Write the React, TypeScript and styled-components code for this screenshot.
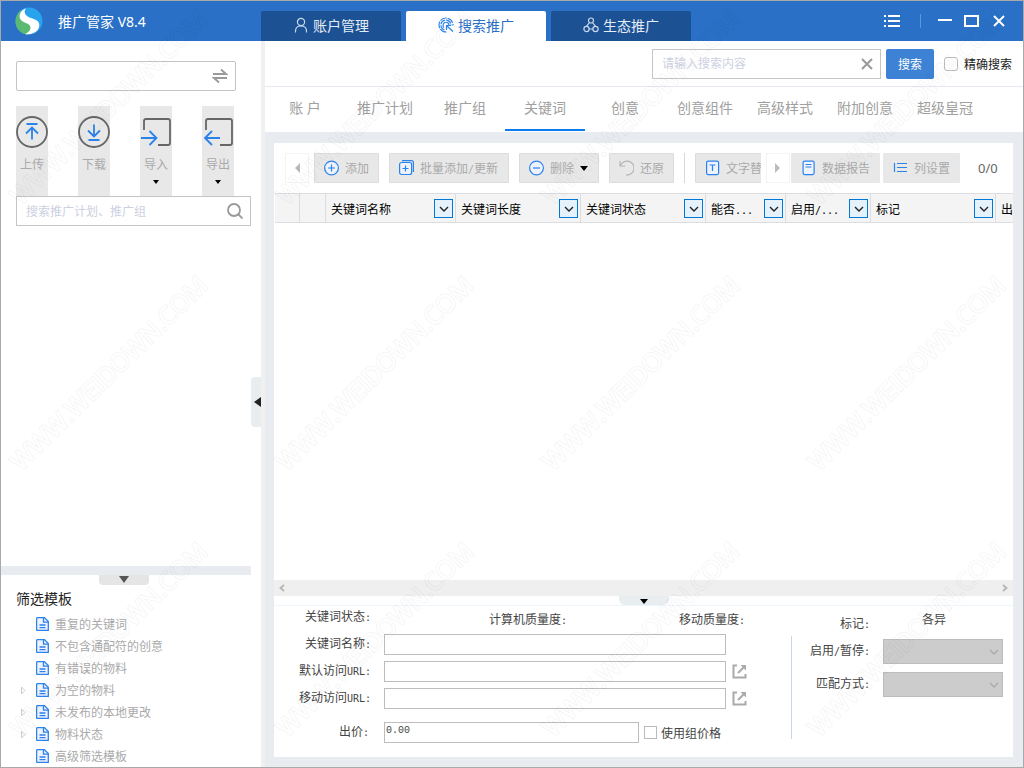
import React from 'react';
import styled, { createGlobalStyle } from 'styled-components';

const Global = createGlobalStyle`
  * { box-sizing: border-box; }
  body {
    margin: 0;
    font-family: "Noto Sans", "Noto Sans CJK SC", sans-serif;
    font-size: 12px;
    color: #333;
  }
  button, input, select { font: inherit; color: inherit; margin: 0; }
  button { padding: 0; border: 0; background: none; white-space: nowrap; }
  svg { display: block; flex: none; }
`;

const Window = styled.div`
  position: relative;
  min-height: 100vh;
  display: flex;
  flex-direction: column;
  border: 1px solid #a9a9a9;
  background: #fff;
`;

const Watermark = styled.svg`
  position: absolute;
  inset: 0;
  width: 100%;
  height: 100%;
  pointer-events: none;
`;

/* ---------- title bar ---------- */

const TitleBar = styled.header`
  display: flex;
  height: 40px;
  background: #2970c6;
  color: #fff;
  font-size: 14px;
`;

const Brand = styled.div`
  flex: none;
  width: 260px;
  padding-left: 14px;
  display: flex;
  align-items: center;
  gap: 15px;
`;

const ModuleTabs = styled.nav`
  flex: 1;
  display: flex;
  align-items: flex-end;
  gap: 5px;
`;

const ModuleTab = styled.button<{ $active?: boolean }>`
  width: 140px;
  height: 30px;
  display: flex;
  align-items: center;
  justify-content: center;
  gap: 4px;
  padding-bottom: 2px;
  border-radius: 2px 2px 0 0;
  background: ${p => (p.$active ? '#fff' : '#1c5293')};
  color: ${p => (p.$active ? '#2970c6' : '#e4ecf6')};
`;

const WindowButtons = styled.div`
  display: flex;
  align-items: center;
  gap: 12px;
  padding-right: 16px;
`;

const WindowDivider = styled.span`
  width: 1px;
  height: 14px;
  margin: 0 5px 0 8px;
  background: #5b96dc;
`;

/* ---------- frame ---------- */

const Body = styled.div`
  flex: 1;
  display: flex;
`;

const Sidebar = styled.aside`
  flex: none;
  width: 250px;
  display: flex;
  flex-direction: column;
`;

const CollapseStrip = styled.div`
  flex: none;
  width: 14px;
  display: flex;
  align-items: center;
  border-right: 4px solid #f0f0f0;
  padding-bottom: 4px;
`;

const CollapseHandle = styled.button`
  width: 10px;
  height: 50px;
  display: flex;
  align-items: center;
  justify-content: flex-end;
  border-radius: 4px 0 0 4px;
  background: #e8edf0;
`;

const Main = styled.main`
  flex: 1;
  min-width: 0;
  display: flex;
  flex-direction: column;
  background: #e8ecf1;
`;

/* ---------- sidebar ---------- */

const Field = styled.div<{ $round?: boolean }>`
  display: flex;
  align-items: center;
  height: 30px;
  padding: 0 7px 0 8px;
  border: 1px solid #c4c4c4;
  border-radius: ${p => (p.$round ? '2px' : '0')};
  background: #fff;
`;

const FieldInput = styled.input`
  flex: 1;
  min-width: 0;
  height: 100%;
  padding: 0 1px;
  border: 0;
  outline: 0;
  background: none;
  &::placeholder { color: #ccd0e2; opacity: 1; }
`;

const AccountArea = styled.div`
  padding: 20px 15px 15px;
`;

const SyncTools = styled.div`
  display: flex;
  gap: 30px;
  padding-left: 15px;
`;

const SyncTool = styled.button`
  width: 32px;
  height: 90px;
  padding-top: 10px;
  display: flex;
  flex-direction: column;
  align-items: center;
  background: #e8e8e8;
  color: #aaa;
`;

const SyncLabel = styled.span`
  margin: 9px 0 7px;
  line-height: 16px;
`;

const TreeSearch = styled.div`
  flex: 1;
  padding-left: 15px;
`;

const Splitter = styled.div`
  height: 9px;
  background: #e8ecf1;
`;

const SplitterHandle = styled.button`
  align-self: center;
  width: 50px;
  height: 10px;
  margin-right: 4px;
  display: flex;
  justify-content: center;
  padding-top: 1px;
  border-radius: 0 0 4px 4px;
  background: #e5e5e5;
`;

const TemplateTitle = styled.h2`
  margin: 0;
  padding-left: 15px;
  font-size: 14px;
  font-weight: 400;
  line-height: 28px;
  color: #222;
`;

const TemplateList = styled.ul`
  margin: 0;
  padding: 0 0 0 17px;
  list-style: none;
`;

const TemplateItem = styled.li`
  display: flex;
  align-items: center;
  height: 22px;
  color: #aaa;
`;

const ExpandSlot = styled.span`
  width: 18px;
`;

const TemplateName = styled.span`
  padding-left: 6px;
`;

/* ---------- search row and level tabs ---------- */

const SearchRow = styled.div`
  display: flex;
  justify-content: flex-end;
  align-items: center;
  gap: 5px;
  height: 46px;
  padding-right: 11px;
  border-bottom: 1px solid #e6e9f0;
  background: #fff;
`;

const KeywordField = styled(Field)`
  width: 229px;
`;

const SearchButton = styled.button`
  width: 48px;
  height: 30px;
  border-radius: 2px;
  background: #3d82d4;
  color: #fff;
`;

const CheckLabel = styled.label<{ $muted?: boolean }>`
  display: flex;
  align-items: center;
  gap: ${p => (p.$muted ? '4px' : '6px')};
  color: ${p => (p.$muted ? '#444' : '#222')};
  white-space: nowrap;
`;

const ExactLabel = styled(CheckLabel)`
  margin-left: 5px;
`;

const CheckBox = styled.input<{ $round?: boolean }>`
  appearance: none;
  flex: none;
  width: ${p => (p.$round ? '14px' : '13px')};
  height: ${p => (p.$round ? '14px' : '13px')};
  border: 1px solid #bbb;
  border-radius: ${p => (p.$round ? '3px' : '0')};
  background: #fff;
`;

const LevelTabs = styled.nav`
  display: flex;
  height: 45px;
  padding-bottom: 1px;
  background: #fff;
`;

const LevelTab = styled.button<{ $active?: boolean }>`
  width: 80px;
  padding-bottom: 2px;
  font-size: 14px;
  color: #a0a0a0;
  border-bottom: 2px solid ${p => (p.$active ? '#0a7cf0' : 'transparent')};
`;

/* ---------- keyword panel ---------- */

const Panel = styled.section`
  flex: 1;
  min-width: 0;
  display: flex;
  flex-direction: column;
  margin: 11px 10px 10px 9px;
  background: #fff;
`;

const Toolbar = styled.div`
  display: flex;
  align-items: center;
  height: 50px;
  padding-left: 11px;
`;

const PageArrow = styled.button`
  flex: none;
  width: 24px;
  height: 30px;
  display: flex;
  align-items: center;
  justify-content: center;
  border: 1px solid #f4f4f4;
`;

const ToolStrip = styled.div`
  flex: 1;
  min-width: 0;
  display: flex;
  align-items: center;
  gap: 10px;
  margin: 0 5px;
  overflow: hidden;
`;

const ToolButton = styled.button<{ $flat?: boolean }>`
  flex: none;
  height: 30px;
  padding: 0 9px;
  display: flex;
  align-items: center;
  gap: 6px;
  border: 1px solid ${p => (p.$flat ? '#e8e8e8' : '#dcdcdc')};
  border-radius: 1px;
  background: #e8e8e8;
  color: #aaa;
`;

const WideToolButton = styled(ToolButton)`
  width: 120px;
`;

const MenuToolButton = styled(ToolButton)`
  width: 80px;
`;

const ReportTools = styled.div`
  display: flex;
  gap: 3px;
  padding-left: 1px;
`;

const ToolDivider = styled.span`
  flex: none;
  width: 1px;
  height: 30px;
  background: #d8d8d8;
`;

const Counter = styled.span`
  flex: none;
  width: 53px;
  padding-left: 18px;
  font-size: 13px;
  color: #666;
`;

const GridArea = styled.div`
  flex: 1;
  margin-left: 1px;
  overflow: hidden;
`;

const Grid = styled.table`
  table-layout: fixed;
  width: 826px;
  min-width: 100%;
  border-collapse: separate;
  border-spacing: 0;
  background: #f4f4f4;
`;

const HeadCell = styled.th<{ $w: number }>`
  width: ${p => p.$w}px;
  height: 30px;
  padding: 1px 2px 0 5px;
  border: solid #dcdde0;
  border-width: 1px 1px 1px 0;
  font-weight: 400;
  color: #000;
  text-align: left;
  white-space: nowrap;
`;

const HeadContent = styled.div`
  display: flex;
  align-items: center;
  justify-content: space-between;
`;

const FilterButton = styled.button`
  flex: none;
  width: 19px;
  height: 19px;
  display: flex;
  align-items: center;
  justify-content: center;
  border: 1px solid #0078d7;
  background: #e5f1fb;
`;

const HalfWidth = styled.span`
  font-family: "DejaVu Sans Mono", monospace;
  font-size: 10px;
`;

const ScrollTrack = styled.div`
  display: flex;
  justify-content: space-between;
  align-items: center;
  height: 16px;
  padding: 0 4px;
  background: #efefef;
`;

const DetailSplitter = styled.div`
  display: flex;
  justify-content: center;
  height: 10px;
  border-bottom: 1px solid #edf6fd;
`;

const DetailHandle = styled.button`
  width: 50px;
  height: 9px;
  display: flex;
  justify-content: center;
  align-items: flex-end;
  padding-bottom: 1px;
  border-radius: 0 0 6px 6px;
  background: #e8edf0;
`;

/* ---------- detail form ---------- */

const Detail = styled.div`
  display: flex;
  height: 151px;
  color: #444;
`;

const KeywordForm = styled.form`
  flex: 1;
  display: grid;
  grid-template-columns: 97px minmax(0, 1fr) 15px;
  grid-template-rows: 22px 21px 21px 21px 28px;
  row-gap: 6px;
  align-items: center;
  align-content: start;
  padding-right: 44px;
`;

const FormLabel = styled.label`
  line-height: 18px;
  text-align: right;
  white-space: nowrap;
`;

const TextBox = styled.input`
  width: 100%;
  height: 21px;
  padding: 0 1px;
  border: 1px solid #bdbdbd;
  background: #fff;
`;

const FieldSlot = styled.div`
  display: flex;
  padding-left: 13px;
  margin-right: 6px;
`;

const QualityRow = styled.div`
  grid-column: 2 / 4;
  display: flex;
  padding-left: 118px;
`;

const Quality = styled.span`
  flex: none;
  width: 190px;
  padding-top: 4px;
  &:last-child { width: auto; }
`;

const OpenLink = styled.a`
  color: #aaa;
`;

const BidLabel = styled(FormLabel)`
  padding: 6px 2px 0 0;
`;

const BidRow = styled.div`
  grid-column: 2 / 4;
  align-self: end;
  display: flex;
  align-items: center;
  gap: 5px;
  padding-left: 13px;
`;

const BidBox = styled(TextBox)`
  flex: none;
  width: 255px;
  padding-bottom: 4px;
  font-family: "Liberation Mono", monospace;
  font-size: 10px;
`;

const DetailSide = styled.div`
  flex: none;
  width: 222px;
`;

const MarkRow = styled.div`
  display: grid;
  grid-template-columns: 78px 120px;
  column-gap: 13px;
  height: 30px;
  padding: 9px 10px 0 1px;
`;

const MarkValue = styled.span`
  padding-left: 39px;
  line-height: 10px;
`;

const StateFields = styled.form`
  display: grid;
  grid-template-columns: 78px 120px;
  grid-template-rows: 25px 25px;
  gap: 8px 13px;
  align-items: center;
  align-content: start;
  height: 103px;
  padding: 3px 10px 0 0;
  border-left: 1px solid #c9d8e6;
`;

const SelectWrap = styled.span`
  display: grid;
  align-items: center;
  justify-items: end;
  > * { grid-area: 1 / 1; }
  > svg { margin-right: 4px; pointer-events: none; }
`;

const Select = styled.select`
  appearance: none;
  width: 100%;
  height: 25px;
  border: 1px solid #bcbcbc;
  border-radius: 0;
  background: #ccc;
  opacity: 1;
`;

/* ---------- icons ---------- */

const Stroke = ({ w, h, color = '#2b83ea', sw = 1, children }: {
  w: number; h: number; color?: string; sw?: number; children: React.ReactNode;
}) => (
  <svg width={w} height={h} viewBox={`0 0 ${w} ${h}`} fill="none" stroke={color} strokeWidth={sw} aria-hidden="true">
    {children}
  </svg>
);

const Arrow = ({ w, h, d, color }: { w: number; h: number; d: string; color: string }) => (
  <svg width={w} height={h} viewBox={`0 0 ${w} ${h}`} aria-hidden="true"><path d={d} fill={color} /></svg>
);

const DownArrow = ({ color = '#000' }: { color?: string }) => <Arrow w={8} h={5} d="M0 0h8L4 5z" color={color} />;

const Chevron = ({ color = '#222' }: { color?: string }) => (
  <Stroke w={10} h={6} color={color} sw={1.4}><path d="M1 1l4 4 4-4" /></Stroke>
);

const Logo = () => (
  <svg width="28" height="28" viewBox="0 0 28 28" aria-hidden="true">
    <circle cx="14" cy="14" r="13.5" fill="#2aa3ef" />
    <path d="M6.500 2.800C-1 8-1.500 19 5 24.500C7.500 26.800 10 27.500 12.500 27.500L18 22L13 14L6 10z" fill="#5bb974" />
    <path d="M11 1.300C5.500 3.500 3.800 8 5 11.500C6.500 15.500 12.500 15.500 14.800 18.500C16.800 21.500 14.500 25 10 27.200C17 28 24 24.500 24.300 18.500C24.500 12.500 18.500 12.500 14 10.300C9.500 8 8.500 4.500 11 1.300z" fill="#fff" />
  </svg>
);

const FilePage = () => (
  <Stroke w={13} h={14} sw={1.3}>
    <path d="M1.500.6h6.900l3.900 4v8.800H1.500A.9.9 0 0 1 .6 12.500v-11a.9.9 0 0 1 .9-.9z" fill="#eef3ff" />
    <path d="M7.500.6v4.600h4.800M3.500 8h6M3.500 10.700h6" />
  </Stroke>
);

const OpenOut = () => (
  <Stroke w={15} h={15} color="#aaa" sw={2}>
    <path d="M5 1.500H1.500v12h12V10" />
    <path d="M6 9l7-7" />
    <path d="M8.500 1H14v5.500z" fill="#aaa" stroke="none" />
  </Stroke>
);

const syncTools = [
  { name: '上传', menu: false, icon: (
    <Stroke w={32} h={32} sw={1.8}><circle cx="16" cy="16" r="15" stroke="#666" /><path d="M10.500 8h11M16 23.500V12M10 17.500l6-6 6 6" /></Stroke>) },
  { name: '下载', menu: false, icon: (
    <Stroke w={32} h={32} sw={1.8}><circle cx="16" cy="16" r="15" stroke="#666" /><path d="M10.500 24h11M16 8.500V20M10 14.500l6 6 6-6" /></Stroke>) },
  { name: '导入', menu: true, icon: (
    <Stroke w={32} h={32} sw={1.8}><path d="M4 14V5q0-2 2-2h22q2 0 2 2v22q0 2-2 2H18" stroke="#666" /><path d="M1 22h15M9.500 15l7 7-7 7" /></Stroke>) },
  { name: '导出', menu: true, icon: (
    <Stroke w={32} h={32} sw={1.8}><path d="M4 14V5q0-2 2-2h22q2 0 2 2v22q0 2-2 2H18" stroke="#666" /><path d="M18 22H3M10 15l-7 7 7 7" /></Stroke>) },
];

const templates = [
  { name: '重复的关键词' },
  { name: '不包含通配符的创意' },
  { name: '有错误的物料' },
  { name: '为空的物料', nested: true },
  { name: '未发布的本地更改', nested: true },
  { name: '物料状态', nested: true },
  { name: '高级筛选模板' },
];

const levels = ['账 户', '推广计划', '推广组', '关键词', '创意', '创意组件', '高级样式', '附加创意', '超级皇冠'];

const columns = [
  { w: 25 }, { w: 26 },
  { w: 130, name: '关键词名称' },
  { w: 125, name: '关键词长度' },
  { w: 125, name: '关键词状态' },
  { w: 80, name: '能否', cut: '...' },
  { w: 85, name: '启用', cut: '/...' },
  { w: 125, name: '标记' },
  { w: 105, name: '出价' },
];

export default function App() {
  return (
    <Window>
      <Global />
      <TitleBar>
        <Brand><Logo /><span>推广管家 V8.4</span></Brand>
        <ModuleTabs>
          <ModuleTab>
            <Stroke w={16} h={16} color="#c8d8ee" sw={1.2}><circle cx="8" cy="5" r="3.600" /><path d="M2.500 15.500v-1.500q0-5 5.500-5t5.500 5v1.500" /></Stroke>
            账户管理
          </ModuleTab>
          <ModuleTab $active>
            <Stroke w={16} h={16} sw={1.200}>
              <path d="M8.500 15A7 7 0 1 1 15 8.500" strokeDasharray="7 1" />
              <path d="M6.500 12.800A5 5 0 1 1 12.900 8.500" strokeDasharray="6 1" />
              <path d="M6 10.500A3 3 0 1 1 11 8.500" />
              <path d="M8.500 8.500l6.500 6M8.500 13V8.500h4.500" />
            </Stroke>
            搜索推广
          </ModuleTab>
          <ModuleTab>
            <Stroke w={16} h={16} color="#c8d8ee" sw={1.200}>
              <circle cx="8" cy="3.500" r="2.500" /><circle cx="3.500" cy="12" r="2.600" /><circle cx="12.500" cy="12" r="2.600" />
              <path d="M6.500 5.500L3.500 9.400M9.500 5.500l3 3.900M6 12h4" />
            </Stroke>
            生态推广
          </ModuleTab>
        </ModuleTabs>
        <WindowButtons>
          <button aria-label="菜单">
            <Stroke w={16} h={12} color="#fff" sw={2}><path d="M0 1h2M4 1h12M0 6h2M4 6h12M0 11h2M4 11h12" /></Stroke>
          </button>
          <WindowDivider />
          <button aria-label="最小化"><Stroke w={14} h={12} color="#fff" sw={2}><path d="M0 5h14" /></Stroke></button>
          <button aria-label="最大化"><Stroke w={15} h={12} color="#fff" sw={2}><path d="M1 1h13v10H1z" /></Stroke></button>
          <button aria-label="关闭"><Stroke w={16} h={12} color="#fff" sw={2}><path d="M3 1l10 10M13 1L3 11" /></Stroke></button>
        </WindowButtons>
      </TitleBar>

      <Body>
        <Sidebar>
          <AccountArea>
            <Field $round>
              <FieldInput aria-label="账户" />
              <Stroke w={16} h={16} color="#999" sw={1.800}><path d="M1 6h13l-5-4.500M15 10H2l5 4.500" /></Stroke>
            </Field>
          </AccountArea>
          <SyncTools>
            {syncTools.map(t => (
              <SyncTool key={t.name} disabled>
                {t.icon}
                <SyncLabel>{t.name}</SyncLabel>
                {t.menu && <Arrow w={6} h={4} d="M0 0h6L3 4z" color="#000" />}
              </SyncTool>
            ))}
          </SyncTools>
          <TreeSearch>
            <Field>
              <FieldInput aria-label="搜索" placeholder="搜索推广计划、推广组" />
              <Stroke w={16} h={16} color="#999" sw={1.800}><circle cx="7" cy="7" r="6" /><path d="M11 11l4.500 4.500" /></Stroke>
            </Field>
          </TreeSearch>
          <Splitter />
          <SplitterHandle aria-label="收起"><Arrow w={10} h={7} d="M0 0h10L5 7z" color="#555" /></SplitterHandle>
          <TemplateTitle>筛选模板</TemplateTitle>
          <TemplateList>
            {templates.map(t => (
              <TemplateItem key={t.name}>
                <ExpandSlot>
                  {t.nested && <Stroke w={8} h={9} color="#ccc"><path d="M3.500 1v7l3.500-3.500z" /></Stroke>}
                </ExpandSlot>
                <FilePage />
                <TemplateName>{t.name}</TemplateName>
              </TemplateItem>
            ))}
          </TemplateList>
        </Sidebar>

        <CollapseStrip>
          <CollapseHandle aria-label="收起侧栏"><Arrow w={7} h={10} d="M7 0v10L0 5z" color="#222" /></CollapseHandle>
        </CollapseStrip>

        <Main>
          <SearchRow>
            <KeywordField>
              <FieldInput aria-label="搜索内容" placeholder="请输入搜索内容" />
              <Stroke w={12} h={12} color="#999" sw={2}><path d="M1 1l10 10M11 1L1 11" /></Stroke>
            </KeywordField>
            <SearchButton>搜索</SearchButton>
            <ExactLabel><CheckBox type="checkbox" $round />精确搜索</ExactLabel>
          </SearchRow>
          <LevelTabs>
            {levels.map(l => <LevelTab key={l} $active={l === '关键词'}>{l}</LevelTab>)}
          </LevelTabs>

          <Panel>
            <Toolbar>
              <PageArrow aria-label="上一组"><Arrow w={5} h={10} d="M5 0v10L0 5z" color="#bbb" /></PageArrow>
              <ToolStrip>
                <ToolButton disabled>
                  <Stroke w={15} h={16} sw={1.200}><circle cx="7.500" cy="8" r="6.900" fill="#eef3ff" /><path d="M4 8h7M7.500 4.500v7" /></Stroke>
                  添加
                </ToolButton>
                <WideToolButton disabled>
                  <Stroke w={15} h={16} sw={1.200}>
                    <rect x=".6" y="2.500" width="12" height="12" rx="2" fill="#eef3ff" /><path d="M3 .6h9.400q2 0 2 2V12M3.500 8.500h6M6.500 5.500v6" />
                  </Stroke>
                  <span>批量添加<HalfWidth>/</HalfWidth>更新</span>
                </WideToolButton>
                <MenuToolButton disabled>
                  <Stroke w={15} h={16} sw={1.200}><circle cx="7.500" cy="8" r="6.900" fill="#eef3ff" /><path d="M4 8h7" /></Stroke>
                  删除
                  <DownArrow />
                </MenuToolButton>
                <ToolButton disabled>
                  <Stroke w={15} h={16} color="#b5b5b5" sw={1.200}><path d="M1 1v5h5M1.500 5.500A7 7 0 1 1 7 15" /></Stroke>
                  还原
                </ToolButton>
                <ToolDivider />
                <ToolButton disabled>
                  <Stroke w={15} h={16} sw={1.200}><rect x="1.600" y="1.100" width="12" height="13.500" rx="1.500" fill="#eef3ff" /><path d="M4.500 5h6M7.500 5v6" /></Stroke>
                  文字替换
                </ToolButton>
              </ToolStrip>
              <PageArrow aria-label="下一组"><Arrow w={5} h={10} d="M0 0v10L5 5z" color="#bbb" /></PageArrow>
              <ReportTools>
                <ToolButton $flat disabled>
                  <Stroke w={15} h={16} sw={1.200}><rect x="2.100" y="1.100" width="11" height="13.500" rx="1.500" fill="#eef3ff" /><path d="M4.500 4.500h6M4.500 7h6" /></Stroke>
                  数据报告
                </ToolButton>
                <ToolButton $flat disabled>
                  <Stroke w={15} h={16} sw={1.200}><path d="M1.500 3v9M4 3.500h10M4 7.500h10M4 11.500h10" /></Stroke>
                  列设置
                </ToolButton>
              </ReportTools>
              <Counter>0/0</Counter>
            </Toolbar>

            <GridArea>
              <Grid>
                <thead>
                  <tr>
                    {columns.map((c, i) => (
                      <HeadCell key={i} $w={c.w} scope="col">
                        {c.name && (
                          <HeadContent>
                            <span>{c.name}{c.cut && <HalfWidth>{c.cut}</HalfWidth>}</span>
                            <FilterButton aria-label={`筛选${c.name}`}><Chevron /></FilterButton>
                          </HeadContent>
                        )}
                      </HeadCell>
                    ))}
                  </tr>
                </thead>
              </Grid>
            </GridArea>
            <ScrollTrack>
              <Stroke w={8} h={8} color="#b5b5b5" sw={1.800}><path d="M6 1L2.500 4 6 7" /></Stroke>
              <Stroke w={8} h={8} color="#b5b5b5" sw={1.800}><path d="M2 1l3.500 3L2 7" /></Stroke>
            </ScrollTrack>
            <DetailSplitter>
              <DetailHandle aria-label="收起详情"><DownArrow /></DetailHandle>
            </DetailSplitter>

            <Detail>
              <KeywordForm>
                <FormLabel as="span">关键词状态<HalfWidth>:</HalfWidth></FormLabel>
                <QualityRow>
                  <Quality>计算机质量度<HalfWidth>:</HalfWidth></Quality>
                  <Quality>移动质量度<HalfWidth>:</HalfWidth></Quality>
                </QualityRow>

                <FormLabel htmlFor="kw-name">关键词名称<HalfWidth>:</HalfWidth></FormLabel>
                <FieldSlot><TextBox id="kw-name" /></FieldSlot>
                <span />

                <FormLabel htmlFor="kw-url">默认访问<HalfWidth>URL:</HalfWidth></FormLabel>
                <FieldSlot><TextBox id="kw-url" /></FieldSlot>
                <OpenLink href="#" aria-label="打开默认访问URL"><OpenOut /></OpenLink>

                <FormLabel htmlFor="kw-murl">移动访问<HalfWidth>URL:</HalfWidth></FormLabel>
                <FieldSlot><TextBox id="kw-murl" /></FieldSlot>
                <OpenLink href="#" aria-label="打开移动访问URL"><OpenOut /></OpenLink>

                <BidLabel htmlFor="kw-bid">出价<HalfWidth>:</HalfWidth></BidLabel>
                <BidRow>
                  <BidBox id="kw-bid" defaultValue="0.00" />
                  <CheckLabel $muted><CheckBox type="checkbox" />使用组价格</CheckLabel>
                </BidRow>
              </KeywordForm>

              <DetailSide>
                <MarkRow>
                  <FormLabel as="span">标记<HalfWidth>:</HalfWidth></FormLabel>
                  <MarkValue>各异</MarkValue>
                </MarkRow>
                <StateFields>
                  <FormLabel htmlFor="kw-state">启用<HalfWidth>/</HalfWidth>暂停<HalfWidth>:</HalfWidth></FormLabel>
                  <SelectWrap><Select id="kw-state" disabled /><Chevron color="#aaa" /></SelectWrap>
                  <FormLabel htmlFor="kw-match">匹配方式<HalfWidth>:</HalfWidth></FormLabel>
                  <SelectWrap><Select id="kw-match" disabled /><Chevron color="#aaa" /></SelectWrap>
                </StateFields>
              </DetailSide>
            </Detail>
          </Panel>
        </Main>
      </Body>

      <Watermark aria-hidden="true" fontFamily="Open Sans, sans-serif" fontSize="25">
        <defs>
          {/* keeps only a thin ring around each letter stem */}
          <mask id="ring" maskUnits="userSpaceOnUse" x="-10" y="-40" width="320" height="60">
            <text fill="#fff" stroke="#fff" strokeWidth="2">WWW.WEIDOWN.COM</text>
            <text fill="#000" stroke="#000" strokeWidth=".4">WWW.WEIDOWN.COM</text>
          </mask>
          <pattern id="mark" width="266" height="266" patternUnits="userSpaceOnUse">
            <g transform="translate(20 205) rotate(-44.500)">
              <rect x="-10" y="-40" width="320" height="60" fill="#000" fillOpacity=".045" mask="url(#ring)" />
            </g>
          </pattern>
        </defs>
        <rect width="100%" height="100%" fill="url(#mark)" />
      </Watermark>
    </Window>
  );
}
